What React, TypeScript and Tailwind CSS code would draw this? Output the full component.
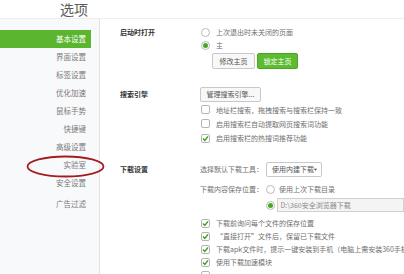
import React from "react";

const FONT = { fontFamily: '"Noto Sans CJK SC", "Noto Sans", sans-serif' };

function Radio({ checked = false }: { checked?: boolean }) {
  return (
    <span className="relative inline-flex h-[9px] w-[9px] shrink-0 items-center justify-center rounded-full border border-[#b9b9b9] bg-white">
      {checked && <span className="h-[5px] w-[5px] rounded-full bg-[#48a824]" />}
    </span>
  );
}

function Check({ checked = false }: { checked?: boolean }) {
  return (
    <span className="inline-flex h-[9px] w-[9px] shrink-0 items-center justify-center rounded-[2px] border border-[#b5b5b5] bg-white">
      {checked && (
        <svg width="7" height="7" viewBox="0 0 7 7">
          <path d="M1 3.6 L2.8 5.4 L6 1.4" fill="none" stroke="#3d9a1e" strokeWidth="1.4" />
        </svg>
      )}
    </span>
  );
}

function CheckLine({ checked, text }: { checked: boolean; text: string }) {
  return (
    <div className="flex h-[13px] items-center whitespace-nowrap">
      <span className="ml-[1px]">
        <Check checked={checked} />
      </span>
      <span className="ml-[6px] text-[#707070]">{text}</span>
    </div>
  );
}

const items = ["基本设置", "界面设置", "标签设置", "优化加速", "鼠标手势", "快捷键", "高级设置", "实验室", "安全设置"];

export default function App() {
  return (
    <div
      className="relative flex h-[274px] w-[404px] flex-col overflow-hidden bg-white text-[7px] leading-none"
      style={FONT}
    >
      {/* header */}
      <div className="flex h-[19px] shrink-0 items-center border-b border-[#eeeeee] pl-[60px] text-[14px] text-[#5a5a5a]">
        选项
      </div>
      <div className="flex min-h-0 flex-1">
        {/* sidebar */}
        <div className="flex w-[100px] shrink-0 flex-col border-r border-[#e2e2e2] bg-[#f8f9fb] pt-[11px] text-[7.5px]">
          {items.map((t, i) => (
            <div
              key={t}
              className={
                i === 0
                  ? "flex h-[18px] w-[91px] items-center justify-end bg-[#5cb52e] pr-[5px] text-white"
                  : "flex h-[18px] w-[91px] items-center justify-end pr-[5px] text-[#7a7a7a]"
              }
            >
              {t}
            </div>
          ))}
          <div className="mt-[3px] flex h-[18px] w-[91px] items-center justify-end pr-[5px] text-[#7a7a7a]">广告过滤</div>
        </div>

        {/* main */}
        <div className="flex min-w-0 flex-1 flex-col pt-[7px]">
          {/* section 1 */}
          <div className="flex">
            <div className="flex h-[13px] w-[100px] shrink-0 items-center pl-[20px] font-bold text-[#333]">启动时打开</div>
            <div className="flex flex-col">
              <div className="flex h-[13px] items-center whitespace-nowrap">
                <span className="ml-[1px]"><Radio /></span>
                <span className="ml-[6px] text-[#707070]">上次退出时未关闭的页面</span>
              </div>
              <div className="flex h-[13px] items-center">
                <span className="ml-[1px]"><Radio checked /></span>
                <span className="ml-[6px] text-[#707070]">主</span>
              </div>
              <div className="ml-[12px] mt-[1px] flex gap-[2px]">
                <div className="flex h-[16px] w-[43px] items-center justify-center rounded-[2px] border border-[#c8c8c8] bg-[#f8f8f8] text-[#555]">修改主页</div>
                <div className="flex h-[16px] w-[41px] items-center justify-center rounded-[2px] border border-[#4da526] bg-[#5cbb30] text-white">锁定主页</div>
              </div>
            </div>
          </div>

          {/* section 2 */}
          <div className="mt-[18px] flex">
            <div className="flex h-[15px] w-[100px] shrink-0 items-center pl-[20px] font-bold text-[#333]">搜索引擎</div>
            <div className="flex flex-col">
              <div className="flex h-[15px] w-[61px] items-center justify-center rounded-[2px] border border-[#c8c8c8] bg-[#f8f8f8] text-[#555]">管理搜索引擎...</div>
              <div className="mt-[1px] flex flex-col">
                <div className="flex h-[14px] items-center whitespace-nowrap">
                  <span className="ml-[1px]"><Check /></span>
                  <span className="ml-[6px] text-[#707070]">地址栏搜索，拖拽搜索与搜索栏保持一致</span>
                </div>
                <div className="flex h-[14px] items-center whitespace-nowrap">
                  <span className="ml-[1px]"><Check /></span>
                  <span className="ml-[6px] text-[#707070]">启用搜索栏自动提取网页搜索词功能</span>
                </div>
                <div className="flex h-[14px] items-center whitespace-nowrap">
                  <span className="ml-[1px]"><Check checked /></span>
                  <span className="ml-[6px] text-[#707070]">启用搜索栏的热搜词推荐功能</span>
                </div>
              </div>
            </div>
          </div>

          {/* section 3 */}
          <div className="mt-[17px] flex">
            <div className="flex h-[15px] w-[100px] shrink-0 items-center pl-[20px] font-bold text-[#333]">下载设置</div>
            <div className="flex min-w-0 flex-1 flex-col">
              <div className="flex h-[15px] items-center whitespace-nowrap">
                <span className="text-[#707070]">选择默认下载工具：</span>
                <div className="ml-[3px] flex h-[15px] w-[56px] items-center justify-between rounded-[2px] border border-[#c8c8c8] bg-white pl-[5px] pr-[4px] text-[#555]">
                  <span>使用内建下载</span>
                  <svg width="5" height="4" viewBox="0 0 5 4"><path d="M0 0 H5 L2.5 3.2 Z" fill="#444" /></svg>
                </div>
              </div>
              <div className="mt-[6px] flex h-[13px] items-center whitespace-nowrap">
                <span className="text-[#707070]">下载内容保存位置：</span>
                <span className="ml-[3px]"><Radio /></span>
                <span className="ml-[4px] text-[#707070]">使用上次下载目录</span>
              </div>
              <div className="mt-[2px] flex h-[14px] items-center whitespace-nowrap">
                <span className="ml-[66px]"><Radio checked /></span>
                <div className="ml-[1.5px] flex h-[14px] flex-1 items-center border border-[#d0d0d0] bg-[#f4f4f4] pl-[3px] text-[#8a8a8a]">
                  D:\360安全浏览器下载
                </div>
              </div>
              <div className="mt-[5px] flex flex-col">
                <CheckLine checked text="下载前询问每个文件的保存位置" />
                <CheckLine checked text="“直接打开”文件后，保留已下载文件" />
                <CheckLine checked text="下载apk文件时，提示一键安装到手机（电脑上需安装360手机助手）" />
                <CheckLine checked text="使用下载加速模块" />
                <CheckLine checked={false} text="" />
              </div>
            </div>
          </div>
        </div>
      </div>

      {/* red annotation ellipse */}
      <svg className="pointer-events-none absolute left-0 top-0" width="404" height="274">
        <ellipse cx="65.5" cy="166.5" rx="38" ry="10" fill="none" stroke="#a51c1f" strokeWidth="1.8" />
      </svg>
    </div>
  );
}
